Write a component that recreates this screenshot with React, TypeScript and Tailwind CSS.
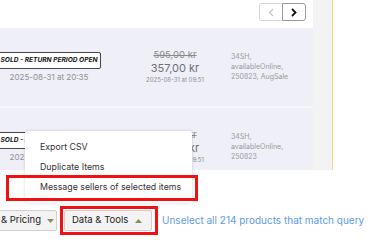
import React from "react";

interface Row {
  date: string;
  was: string;
  now: string;
  soldAt: string;
  tags: string[];
}

const rows: Row[] = [
  {
    date: "2025-08-31 at 20:35",
    was: "595,00 kr",
    now: "357,00 kr",
    soldAt: "2025-08-31 at 09:51",
    tags: ["34SH,", "availableOnline,", "250823, AugSale"],
  },
  {
    date: "2025-08-31 at 20:35",
    was: "595,00 kr",
    now: "357,00 kr",
    soldAt: "2025-08-31 at 09:51",
    tags: ["34SH,", "availableOnline,", "250823"],
  },
];

const Caret: React.FC<{ up?: boolean }> = ({ up }) => (
  <svg width="7" height="4" viewBox="0 0 7 4" className="shrink-0">
    <polygon points={up ? "0,4 7,4 3.5,0" : "0,0 7,0 3.5,4"} fill="#8e8b4c" />
  </svg>
);

export default function App() {
  return (
    <div className="relative w-[370px] h-[242px] overflow-hidden bg-white font-['Inter',sans-serif]">
      {/* Table + side panel */}
      <div className="flex h-[170px] overflow-hidden">
        <div className="w-[313px] shrink-0 flex flex-col">
          <div className="h-[28px] shrink-0 flex justify-end items-start pt-[3px] pr-[7px] bg-white">
            <button className="w-[24px] h-[18px] flex items-center justify-center border border-[#d6d6d6] rounded-l-[3px] bg-white">
              <svg width="6" height="9" viewBox="0 0 6 9">
                <polyline points="5,1 1.5,4.5 5,8" fill="none" stroke="#c4c4c4" strokeWidth="1.2" />
              </svg>
            </button>
            <button className="w-[24px] h-[18px] -ml-px flex items-center justify-center border border-[#9a9a9a] rounded-r-[3px] bg-white">
              <svg width="6" height="9" viewBox="0 0 6 9">
                <polyline points="1,1 4.5,4.5 1,8" fill="none" stroke="#111" strokeWidth="1.8" />
              </svg>
            </button>
          </div>

          {rows.map((r, i) => (
            <div
              key={i}
              className="h-[80px] shrink-0 flex items-center bg-[#efeff7] border-b-2 border-[#f7f7fb]"
            >
              <div className="w-[98px] shrink-0 flex flex-col items-center gap-[3px]">
                <span className="whitespace-nowrap border border-[#444] rounded-[2px] bg-white px-[3px] py-[3px] text-[6.6px] leading-[9px] font-bold italic text-[#111]">
                  SOLD - RETURN PERIOD OPEN
                </span>
                <span className="whitespace-nowrap text-[8px] leading-[11px] text-[#8e8e94]">{r.date}</span>
              </div>
              <div className="ml-[22px] w-[110px] shrink-0 flex flex-col items-center">
                <span className="text-[9.5px] leading-[12px] text-[#8a8a8a] line-through">{r.was}</span>
                <span className="text-[11px] leading-[14px] text-[#6f6f73]">{r.now}</span>
                <span className="text-[6px] leading-[10px] text-[#8e8e94]">{r.soldAt}</span>
              </div>
              <div className="ml-px flex flex-col text-[7px] leading-[10px] text-[#9a9aa2]">
                {r.tags.map((t) => (
                  <span key={t} className="whitespace-nowrap">{t}</span>
                ))}
              </div>
            </div>
          ))}
        </div>
        <div className="w-[19px] shrink-0 bg-[#f3f3f3]" />
        <div className="w-px shrink-0 bg-[#f6d980]" />
        <div className="flex-1 bg-white" />
      </div>

      {/* Bottom action bar */}
      <div className="flex items-center pt-[40px] -ml-[8px]">
        <button className="w-[65px] shrink-0 h-[21px] flex items-center justify-end gap-[6px] pr-[2px] border border-[#cfcfcf] rounded-[2px] bg-[#f3f3f3] text-[9.5px] text-[#222] whitespace-nowrap">
          <span>&amp; Pricing</span>
          <Caret />
        </button>
        <button className="ml-[7px] w-[88px] shrink-0 h-[21px] flex items-center gap-[7px] pl-[7px] border border-[#cfcfcf] rounded-[2px] bg-[#f3f3f3] text-[9.5px] text-[#222] whitespace-nowrap">
          <span>Data &amp; Tools</span>
          <Caret up />
        </button>
        <a className="ml-[10px] whitespace-nowrap text-[10px] text-[#5b9be6]">
          Unselect all 214 products that match query
        </a>
      </div>

      {/* Open dropdown menu */}
      <div className="absolute left-[25px] top-[131px] w-[167px] py-[6px] bg-white rounded-[2px] shadow-[0_0_3px_rgba(0,0,0,0.18)]">
        {["Export CSV", "Duplicate Items", "Message sellers of selected items"].map((label) => (
          <div key={label} className="h-[20px] flex items-center px-[15px] text-[8.8px] text-[#333] whitespace-nowrap">
            {label}
          </div>
        ))}
      </div>

      {/* Highlight boxes */}
      <div className="absolute left-[6px] top-[175px] w-[192px] h-[26px] border-[3px] border-[#f01212]" />
      <div className="absolute left-[60px] top-[206px] w-[98px] h-[29px] border-[3px] border-[#f01212]" />
    </div>
  );
}
